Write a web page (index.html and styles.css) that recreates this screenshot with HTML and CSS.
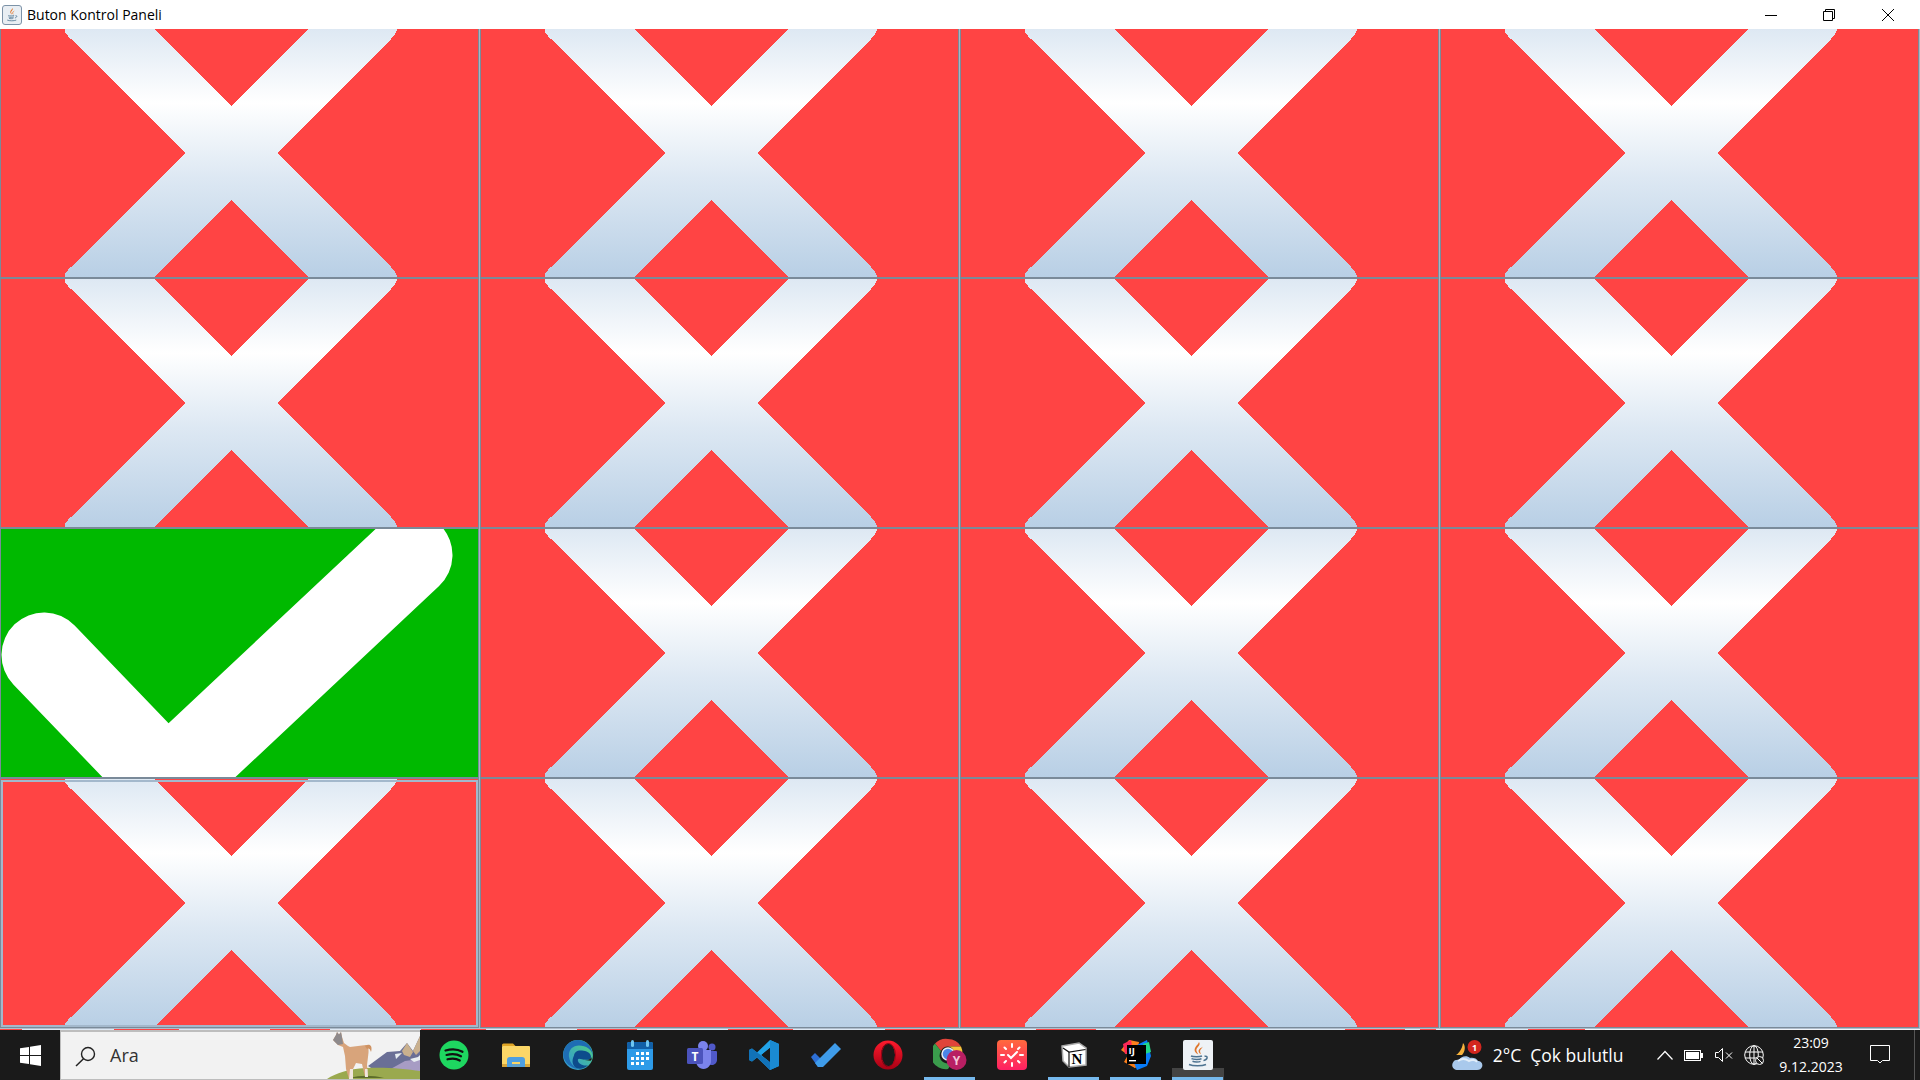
FILE: index.html
```html
<!DOCTYPE html>
<html lang="tr">
<head>
<meta charset="utf-8">
<title>Buton Kontrol Paneli</title>
<link rel="stylesheet" href="styles.css">
</head>
<body>
<svg class="defs" width="0" height="0" aria-hidden="true">
  <defs>
    <linearGradient id="metal" gradientUnits="userSpaceOnUse" x1="0" y1="0" x2="0" y2="250">
      <stop offset="0" stop-color="#dde8f3"/>
      <stop offset="0.3" stop-color="#ffffff"/>
      <stop offset="0.6" stop-color="#dde8f3"/>
      <stop offset="1" stop-color="#b8cfe5"/>
    </linearGradient>
    <symbol id="xmark" viewBox="1 1 477 248">
      <path shape-rendering="crispEdges" fill="url(#metal)" d="M65 0L153 0L231 78L309 0L396.500 0Q398 4 391 11L277 125L391 239Q398 246 396.500 250L309 250L231 172L153 250L65 250Q63 246 71 239L185 125L71 11Q63 4 65 0Z"/>
    </symbol>
    <symbol id="javacup" viewBox="0 0 30 30">
      <path d="M16 2c2.500 3.500-3.500 5.500-2.500 9 .4 1.300 1.200 2.200 1.800 3.500-3.500-2-4.800-4.500-2.600-7.800C13.800 5 15.500 4 16 2z" fill="#e0762c"/>
      <path d="M20 6.500c-1.200 2.200-3.400 3.200-2.900 5.500.2.800.6 1.400.9 2.300-2.300-1.300-3.200-3.300-1.700-5C17.400 7.800 19.200 7.500 20 6.500z" fill="#e0762c"/>
      <path d="M8 16c2 1 9 1 11 0M8.500 18.700c2 1 8.500 1 10 0M9.500 21.300c2 .8 6.500.8 8 0M6 24.500c4 1.800 13 1.800 17 0M21.500 16.300c3.500-.8 3.800 2.800-1 4.300" fill="none" stroke="#4d7391" stroke-width="1.500"/>
    </symbol>
  </defs>
</svg>

<header class="titlebar">
  <div class="title-left">
    <svg class="title-icon" viewBox="0 0 20 20">
      <rect x="0.500" y="0.500" width="19" height="19" rx="2.500" fill="#e9eef3" stroke="#7d93a8"/>
      <use href="#javacup" x="2" y="2" width="16" height="16"/>
    </svg>
    <span class="title-text">Buton Kontrol Paneli</span>
  </div>
  <div class="win-controls">
    <span class="win-btn"><svg width="14" height="14" viewBox="0 0 14 14"><path d="M1 7.500H13" stroke="#000" fill="none"/></svg></span>
    <span class="win-btn"><svg width="14" height="14" viewBox="0 0 14 14"><path d="M1.500 3.500h9v9h-9zM3.500 3.500v-2h9v9h-2" stroke="#000" fill="none"/></svg></span>
    <span class="win-btn"><svg width="14" height="14" viewBox="0 0 14 14"><path d="M1 1L13 13M13 1L1 13" stroke="#000" fill="none"/></svg></span>
  </div>
</header>

<main class="grid">
  <div class="cell top"><svg class="art"><use href="#xmark"/></svg></div>
  <div class="cell top"><svg class="art"><use href="#xmark"/></svg></div>
  <div class="cell top"><svg class="art"><use href="#xmark"/></svg></div>
  <div class="cell top"><svg class="art"><use href="#xmark"/></svg></div>

  <div class="cell"><svg class="art"><use href="#xmark"/></svg></div>
  <div class="cell"><svg class="art"><use href="#xmark"/></svg></div>
  <div class="cell"><svg class="art"><use href="#xmark"/></svg></div>
  <div class="cell"><svg class="art"><use href="#xmark"/></svg></div>

  <div class="cell done"><svg class="art" viewBox="1 1 477 248"><path d="M44 127L167 255L410 27" fill="none" stroke="#fff" stroke-width="85" stroke-linecap="round" stroke-linejoin="round"/></svg></div>
  <div class="cell"><svg class="art"><use href="#xmark"/></svg></div>
  <div class="cell"><svg class="art"><use href="#xmark"/></svg></div>
  <div class="cell"><svg class="art"><use href="#xmark"/></svg></div>

  <div class="cell focused"><svg class="art"><use href="#xmark"/></svg></div>
  <div class="cell"><svg class="art"><use href="#xmark"/></svg></div>
  <div class="cell"><svg class="art"><use href="#xmark"/></svg></div>
  <div class="cell"><svg class="art"><use href="#xmark"/></svg></div>
</main>
<div class="next-row"></div>

<footer class="taskbar">
  <div class="start">
    <svg width="21" height="21" viewBox="0 0 21 21"><path d="M0 3.200L9 2V10H0zM10 1.800L21 0V10H10zM0 11H9V19L0 17.800zM10 11H21V21L10 19.200z" fill="#fff"/></svg>
  </div>
  <div class="search">
    <svg class="search-icon" width="22" height="22" viewBox="0 0 22 22"><circle cx="13" cy="9" r="6.500" fill="none" stroke="#222" stroke-width="1.400"/><path d="M8.500 13.800L1 21" stroke="#222" stroke-width="1.500" fill="none"/></svg>
    <span class="search-text">Ara</span>
    <svg class="llama" width="94" height="48" viewBox="0 0 94 48">
      <path d="M42 35L61 21L74 20L81 12L87 20L94 5V40H50Z" fill="#6a6f96"/>
      <path d="M76 20L81 12L87 21L84 26L78 24ZM87 20L94 5V20L90 24Z" fill="#c9b08e"/>
      <path d="M61 40L79 30L94 28V40Z" fill="#a79cc4"/>
      <path d="M69 23L76 22L70 28ZM84 28L92 26L94 24V29L88 31Z" fill="#e8eef2"/>
      <path d="M1 48C10 42 22 38 40 37C60 36 80 38 94 40V48Z" fill="#9aa94f"/>
      <path d="M24 47C34 44 46 44 58 47Z" fill="#5d6d2b"/>
      <path d="M7 9L10 4L11 1L13 3.500L15 1L16 6L18 12L22 15L24 16L40 14C43 15 43 20 42 26L41 34L42 46H39L36 33L30 32L27 38L27 48H23L20 38L19 25L17 16L12 14Z" fill="#d8a47b"/>
      <path d="M39 15C43 12 47 14 45 21C44 17 42 17 41 18Z" fill="#cf9262"/>
      <path d="M7 9L10 4L11 1L13 3.500L15 1L16 6L17 13L12 14Z" fill="#8e8a8c"/>
      <path d="M24 38H27V48H23ZM39 38H41.500L42 46H39Z" fill="#f1e6de"/>
    </svg>
  </div>
  <nav class="apps">
    <span class="app">
      <svg width="30" height="30" viewBox="0 0 30 30"><circle cx="15" cy="15" r="14.500" fill="#1ed760"/><path d="M6.500 10.500c6-1.800 12.500-1.300 17 1.300M7.500 15c5-1.400 10.500-1 14.500 1.300M8.500 19.300c4.300-1.100 9-.8 12.300 1.200" fill="none" stroke="#111" stroke-width="2.200" stroke-linecap="round"/></svg>
    </span>
    <span class="app">
      <svg width="28" height="24" viewBox="0 0 28 24"><path d="M0 2a1.500 1.500 0 0 1 1.500-1.500H11l3 3H0z" fill="#e0a526"/><rect x="0" y="3" width="28" height="21" rx="1" fill="#fbd667"/><rect x="0" y="21" width="28" height="3" fill="#d8a63a"/><path d="M5 24v-7a3 3 0 0 1 3-3h12a3 3 0 0 1 3 3v7h-5v-5h-8v5z" fill="#4e9fe0"/><rect x="5" y="21" width="18" height="3" fill="#4e9fe0" opacity=".85"/></svg>
    </span>
    <span class="app">
      <svg width="30" height="30" viewBox="0 0 30 30"><defs><linearGradient id="edgeA" x1="0" y1="1" x2="1" y2="0"><stop offset="0" stop-color="#2c8fdc"/><stop offset="1" stop-color="#54d67e"/></linearGradient></defs><circle cx="15" cy="15" r="15" fill="url(#edgeA)"/><path d="M30 16.500C29 9 23 5.500 16 5.500C9 5.500 5 11 6 17C7 24 13 30 19 29C13 30 3 26 .5 17C-1 9 5 0 15 0C23 0 30 7 30 16.500Z" fill="#1e6db4"/><path d="M11 16c0-4 3.500-6 8-5.500 4 .5 9 2 9 6.500 0 2-2 2.800-5 2.800-3 0-5-1-7-1-1.800 0-1.500 3 1 5 2 1.500 5 2.200 8 1.500-3 2.800-7 4-11 3-4-1.500-6-7-3-12.800z" fill="#0d4c8c"/><path d="M18 19.500c3 .5 5.500.8 7.500.3 1.500-.5 2.500-1.500 2.500-2.800 1 1.700 1 3-.5 3.800" fill="#1a1a1a"/></svg>
    </span>
    <span class="app">
      <svg width="26" height="30" viewBox="0 0 26 30"><rect x="0" y="2" width="26" height="28" rx="2" fill="#2e9be8"/><path d="M0 4a2 2 0 0 1 2-2h22a2 2 0 0 1 2 2v5H0z" fill="#1160a8"/><rect x="4" y="0" width="3" height="7" rx="1.500" fill="#6fc6f2"/><rect x="19" y="0" width="3" height="7" rx="1.500" fill="#6fc6f2"/><g fill="#fff"><rect x="9" y="12" width="3" height="3"/><rect x="14" y="12" width="3" height="3"/><rect x="19" y="12" width="3" height="3"/><rect x="4" y="17" width="3" height="3"/><rect x="9" y="17" width="3" height="3"/><rect x="14" y="17" width="3" height="3"/><rect x="19" y="17" width="3" height="3"/><rect x="4" y="22" width="3" height="3"/><rect x="9" y="22" width="3" height="3"/><rect x="14" y="22" width="3" height="3"/></g></svg>
    </span>
    <span class="app">
      <svg width="30" height="28" viewBox="0 0 30 28"><circle cx="25" cy="6" r="3.500" fill="#5059c9"/><path d="M20 10h9a1 1 0 0 1 1 1v8c0 3-3 5-5 5-3 0-5-2-5-5z" fill="#5059c9"/><circle cx="16" cy="5" r="5" fill="#7b83eb"/><path d="M9 9h15v11c0 4-3 8-7.500 8S9 24 9 20z" fill="#7b83eb"/><rect x="0" y="7" width="16" height="16" rx="1.500" fill="#4b53bc"/><text class="t-letter" x="8" y="19.500" text-anchor="middle">T</text></svg>
    </span>
    <span class="app">
      <svg width="30" height="30" viewBox="0 0 30 30"><path d="M21 0L30 4V26L21 30L8 17.500L3 21.500L0 20V10L3 8.500L8 12.500ZM21 8L12.500 15L21 22Z" fill="#22a3e8"/><path d="M21 0L30 4V26L21 30Z" fill="#1a8ad2"/><path d="M21 8L12.500 15L21 22Z" fill="#1a1a1a"/><path d="M0 10L3 8.500L21 22V30L8 17.500L3 21.500L0 20Z" fill="#1172b8"/></svg>
    </span>
    <span class="app">
      <svg width="30" height="24" viewBox="0 0 30 24"><path d="M0 14L4 10L10 16L7 24Z" fill="#2d6fd6"/><path d="M7 24L4 20L24 0L30 6L12 24Q9 26 7 24Z" fill="#3f9cea"/></svg>
    </span>
    <span class="app">
      <svg width="30" height="30" viewBox="0 0 30 30"><defs><linearGradient id="opA" x1="0" y1="0" x2="0" y2="1"><stop offset="0" stop-color="#ff1b2d"/><stop offset="1" stop-color="#a70014"/></linearGradient></defs><ellipse cx="15" cy="15" rx="14.500" ry="14.500" fill="url(#opA)"/><ellipse cx="15" cy="15" rx="7" ry="11.500" fill="#1a1a1a"/><ellipse cx="15.500" cy="15" rx="7" ry="11.500" fill="none" stroke="#a70014" stroke-width="1"/></svg>
    </span>
    <span class="app active">
      <svg width="34" height="34" viewBox="0 0 34 34"><path d="M15 0A15 15 0 0 1 28 7.500H15A7.500 7.500 0 0 0 8 12L2 4.500A15 15 0 0 1 15 0Z" fill="#e0443a" transform="translate(0 1)"/><path d="M28 8.500A15 15 0 0 1 27 23L21 14A7 7 0 0 0 15 8.500Z" fill="#f5c33b"/><path d="M2 5.500A15 15 0 0 0 15 31L21 22A7.500 7.500 0 0 1 8 13Z" fill="#3a9c4c"/><circle cx="15" cy="16" r="6" fill="#4a86e8" stroke="#e8eef6" stroke-width="1.500"/><circle cx="23.500" cy="22" r="10" fill="#b81f63"/><text class="c-letter" x="23.500" y="26.500" text-anchor="middle">Y</text></svg>
    </span>
    <span class="app">
      <svg width="30" height="30" viewBox="0 0 30 30"><defs><linearGradient id="tkA" x1="0" y1="0" x2="0" y2="1"><stop offset="0" stop-color="#ff6a3d"/><stop offset="1" stop-color="#ff1f63"/></linearGradient></defs><rect width="30" height="30" rx="4" fill="url(#tkA)"/><g stroke="#fff" stroke-width="2" stroke-linecap="round" fill="none"><path d="M15 4V7M15 23V26M4 15H7M23 15H26M7.500 7.500L9 9M21 21L22.500 22.500M22.500 7.500L21 9M7.500 22.500L9 21"/><path d="M11 15L14 18L20 12"/></g></svg>
    </span>
    <span class="app active">
      <svg width="26" height="26" viewBox="0 0 26 26"><path d="M1 4L18 1L25 6V23L8 25L2 19Z" fill="#fff" stroke="#a8a8a8" stroke-width="1.500"/><path d="M2 6L8 10L24.500 7.500" fill="none" stroke="#111" stroke-width="1.200"/><path d="M8 10V25" stroke="#111" stroke-width="1.200"/><text class="n-letter" x="16" y="22" text-anchor="middle">N</text></svg>
    </span>
    <span class="app active">
      <svg width="30" height="30" viewBox="0 0 30 30"><path d="M0 10L8 0L18 2L14 28L3 22L7 15Z" fill="#fc801d"/><path d="M2 4L10 0L12 12L4 14Z" fill="#fe2857"/><path d="M4 20L14 28L22 24L14 14Z" fill="#f97a12"/><path d="M14 6L26 0L30 16L26 26L16 30L10 16Z" fill="#087cfa"/><path d="M22 4L28 2L30 12L24 14Z" fill="#21d789"/><rect x="6" y="5" width="19" height="19" fill="#000"/><text class="ij-letter" x="7.500" y="14">IJ</text><rect x="8" y="20" width="7" height="1.400" fill="#fff"/></svg>
    </span>
    <span class="app active current">
      <svg class="java-icon" width="30" height="30" viewBox="0 0 30 30"><rect width="30" height="30" rx="2" fill="#eef2f6"/><use href="#javacup" x="0" y="0" width="30" height="30"/></svg>
    </span>
  </nav>
  <div class="tray">
    <div class="weather">
      <svg width="32" height="30" viewBox="0 0 32 30"><path d="M4 15C6 14 10 10 11 3C14 6 13 12 10 15Z" fill="#f7b23b"/><circle cx="22.500" cy="7" r="7" fill="#d3271f"/><text class="w-badge" x="22.500" y="10.500" text-anchor="middle">1</text><path d="M6 30C1 30-1 26 1 22.500C2 20 5 19.500 7 20C9 16 15 15 18 18C20 17 25 18 26 21C30 21 31 25 30 27C29 29 28 30 25 30Z" fill="#a9c9ec"/><path d="M6 21C10 18 14 19 17 21C20 19 24 20 25 22" fill="none" stroke="#e3eef9" stroke-width="2"/></svg>
      <span class="temp">2°C</span>
      <span class="cond">Çok bulutlu</span>
    </div>
    <div class="sys">
      <svg width="16" height="10" viewBox="0 0 16 10"><path d="M.5 9.500L8 1.500L15.500 9.500" fill="none" stroke="#fff" stroke-width="1.200"/></svg>
      <svg width="19" height="11" viewBox="0 0 19 11"><rect x=".5" y=".5" width="16" height="10" fill="none" stroke="#fff"/><rect x="2" y="2" width="13" height="7" fill="#fff"/><rect x="17" y="3" width="2" height="5" fill="#fff"/></svg>
      <svg width="18" height="14" viewBox="0 0 18 14"><path d="M.5 4.500H3.500L7.500 .5V13.500L3.500 9.500H.5Z" fill="none" stroke="#fff"/><path d="M11 4.500L17 10.500M17 4.500L11 10.500" stroke="#fff" fill="none"/></svg>
      <svg width="20" height="20" viewBox="0 0 20 20"><g fill="none" stroke="#fff"><circle cx="10" cy="10" r="9.300"/><ellipse cx="10" cy="10" rx="4.300" ry="9.300"/><path d="M1 7H19M1 13H19M10 1V19"/></g><circle cx="15.500" cy="15.500" r="4" fill="#1a1a1a" stroke="#fff"/><path d="M13 13L18 18" stroke="#fff"/></svg>
    </div>
    <div class="clock"><span>23:09</span><span>9.12.2023</span></div>
    <div class="notif">
      <svg width="20" height="20" viewBox="0 0 20 20"><path d="M.5 .5H19.500V15.500H12.500L10 18L7.500 15.500H.5Z" fill="none" stroke="#fff"/></svg>
    </div>
    <div class="show-desktop"></div>
  </div>
</footer>
</body>
</html>
```

FILE: styles.css
```css
* { box-sizing: border-box; }
html, body { margin: 0; padding: 0; }
body {
  width: 1920px;
  height: 1080px;
  overflow: hidden;
  background: #a9b6c3;
  display: flex;
  flex-direction: column;
  font-family: "Open Sans", "Noto Sans", sans-serif;
}
.defs { display: block; width: 0; height: 0; position: absolute; }

.titlebar {
  height: 29px;
  flex: none;
  background: #fff;
  display: flex;
  align-items: center;
  justify-content: space-between;
}
.title-left { display: flex; align-items: center; padding-left: 2px; gap: 5px; }
.title-icon { width: 20px; height: 20px; display: block; }
.title-text { font-size: 14px; color: #000; }
.win-controls { display: flex; padding-right: 3px; }
.win-btn { width: 58.500px; height: 29px; display: flex; align-items: center; justify-content: center; }

.grid {
  flex: none;
  display: grid;
  grid-template-columns: repeat(4, 479px);
  grid-template-rows: 249px 250px 250px 250px;
  column-gap: 1px;
  background: #a9b6c3;
}
.cell {
  background: #ff4444;
  border: 1px solid #7a8a99;
  overflow: hidden;
  position: relative;
}
.cell.top { border-top: 0; }
.cell.done { background: #00b900; }
.cell.focused::after {
  content: "";
  position: absolute;
  top: 1px;
  left: 0;
  right: 0;
  bottom: 0;
  border: 2px solid #a3b8cc;
}
.art { display: block; width: 100%; height: 100%; }

.next-row {
  flex: none;
  height: 2px;
  border-top: 1px solid #aebccb;
  background: linear-gradient(90deg,
    #ff4444 0 22px, #dde8f3 22px 114px, #ff4444 114px 179px, #dde8f3 179px 270px,
    #ff4444 270px 330px, #dde8f3 330px 421px, #ff4444 421px 486px, #dde8f3 486px 577px,
    #ff4444 577px 637px, #dde8f3 637px 728px, #ff4444 728px 793px, #dde8f3 793px 885px,
    #ff4444 885px 945px, #dde8f3 945px 1036px, #ff4444 1036px 1096px, #dde8f3 1096px 1190px,
    #ff4444 1190px 1250px, #dde8f3 1250px 1345px, #ff4444 1345px 1405px, #dde8f3 1405px 1420px,
    #ff4444 1420px 1436px, #dde8f3 1436px 1528px, #ff4444 1528px 1585px, #f2f5f9 1585px);
}

.taskbar {
  flex: none;
  height: 50px;
  background: #1a1a1a;
  display: flex;
  align-items: stretch;
  color: #fff;
}
.start { width: 60px; display: flex; align-items: center; justify-content: center; }
.search {
  width: 360px;
  background: #f2f2f2;
  border-top: 2px solid #bdbdbd;
  border-bottom: 1px solid #bdbdbd;
  border-left: 1px solid #bdbdbd;
  display: flex;
  align-items: center;
  padding-left: 14px;
}
.search-icon { flex: none; }
.search-text { margin-left: 13px; margin-bottom: 2px; font-size: 18px; color: #333; flex: 1; }
.llama { flex: none; align-self: flex-end; }

.apps { display: flex; padding-left: 3px; }
.app {
  width: 62px;
  display: flex;
  align-items: center;
  justify-content: center;
  position: relative;
}
.app svg { display: block; }
.app.active::after {
  content: "";
  position: absolute;
  left: 5px;
  right: 6px;
  bottom: 0;
  height: 3px;
  background: #76b9ed;
}
.app.current::before {
  content: "";
  position: absolute;
  left: 5px;
  right: 5px;
  bottom: 0;
  height: 12px;
  background: #444;
}
.java-icon { position: relative; margin-top: -1px; }

.t-letter { font: 700 12px "Open Sans", sans-serif; fill: #fff; }
.c-letter { font: 700 12px "Open Sans", sans-serif; fill: #f3c6d8; }
.n-letter { font: 700 15px "Liberation Serif", serif; fill: #000; }
.ij-letter { font: 700 9.500px "Open Sans", sans-serif; fill: #fff; }
.w-badge { font: 700 9px "Open Sans", sans-serif; fill: #fff; }

.tray { flex: 1; display: flex; align-items: center; justify-content: flex-end; }
.weather { display: flex; align-items: center; margin-right: 33px; }
.temp { font-size: 17.500px; margin-left: 9px; }
.cond { font-size: 17.500px; margin-left: 9px; }
.sys { display: flex; align-items: center; gap: 11.500px; }
.clock {
  width: 74px;
  margin-left: 10px;
  display: flex;
  flex-direction: column;
  align-items: center;
  gap: 4px;
  font-size: 14px;
  line-height: 20px;
}
.notif { width: 66px; display: flex; justify-content: center; padding-right: 3px; }
.show-desktop { width: 6px; height: 100%; border-left: 1px solid #555; }
```
